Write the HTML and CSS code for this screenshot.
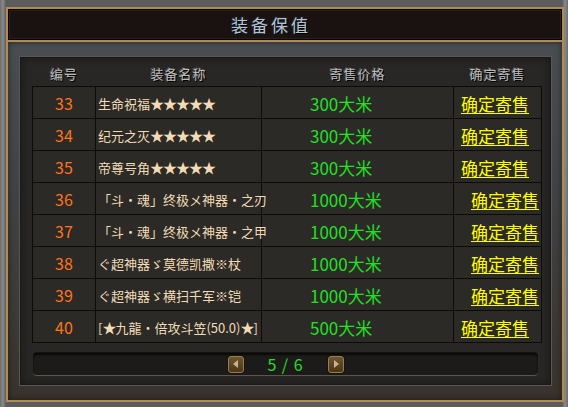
FILE: index.html
```html
<!DOCTYPE html>
<html lang="zh">
<head>
<meta charset="utf-8">
<title>装备保值</title>
<link rel="stylesheet" href="styles.css">
</head>
<body>
<div class="frame">
  <div class="title"><span>装备保值</span></div>
  <div class="stone">
    <div class="panel">
      <table class="grid">
        <colgroup><col class="c1"><col class="c2"><col class="c3"><col class="c4"></colgroup>
        <thead>
          <tr><th>编号</th><th>装备名称</th><th>寄售价格</th><th>确定寄售</th></tr>
        </thead>
        <tbody>
          <tr><td class="id">33</td><td class="name">生命祝福<span class="st">★★★★★</span></td><td class="price">300大米</td><td class="act"><a href="#">确定寄售</a></td></tr>
          <tr><td class="id">34</td><td class="name">纪元之灭<span class="st">★★★★★</span></td><td class="price">300大米</td><td class="act"><a href="#">确定寄售</a></td></tr>
          <tr><td class="id">35</td><td class="name">帝尊号角<span class="st">★★★★★</span></td><td class="price">300大米</td><td class="act"><a href="#">确定寄售</a></td></tr>
          <tr><td class="id">36</td><td class="name">「斗・魂」终极メ神器・之刃</td><td class="price">1000大米</td><td class="act wide"><a href="#">确定寄售</a></td></tr>
          <tr><td class="id">37</td><td class="name">「斗・魂」终极メ神器・之甲</td><td class="price">1000大米</td><td class="act wide"><a href="#">确定寄售</a></td></tr>
          <tr><td class="id">38</td><td class="name">ぐ超神器ゞ莫德凯撒※杖</td><td class="price">1000大米</td><td class="act wide"><a href="#">确定寄售</a></td></tr>
          <tr><td class="id">39</td><td class="name">ぐ超神器ゞ横扫千军※铠</td><td class="price">1000大米</td><td class="act wide"><a href="#">确定寄售</a></td></tr>
          <tr><td class="id">40</td><td class="name">[<span class="st">★</span>九龍・倍攻斗笠(50.0)<span class="st">★</span>]</td><td class="price">500大米</td><td class="act"><a href="#">确定寄售</a></td></tr>
        </tbody>
      </table>
      <div class="pager">
        <button class="pbtn prev" type="button"><span class="tri-l"></span></button>
        <span class="pnum">5 / 6</span>
        <button class="pbtn next" type="button"><span class="tri-r"></span></button>
      </div>
    </div>
  </div>
</div>
</body>
</html>
```
FILE: styles.css
```css
html, body {
  margin: 0;
  padding: 0;
}
body {
  width: 568px;
  height: 407px;
  box-sizing: border-box;
  padding: 7px 4px 5px 6px;
  background: linear-gradient(90deg, #6e6e6e 0px, #8a8a8a 3px, #5c5c5c 6px, #5c5c5c 562px, #8a8a8a 565px, #6a6a6a 568px);
  font-family: "Noto Sans CJK SC", "Noto Sans", sans-serif;
  overflow: hidden;
}
.frame {
  height: 395px;
  box-sizing: border-box;
  border: 2px solid #b08c50;
  display: flex;
  flex-direction: column;
  background: #3b3935;
}
.title {
  height: 33px;
  flex: none;
  box-sizing: border-box;
  border-bottom: 2px solid #b08c50;
  background: #1a1210;
  box-shadow: inset 0 0 0 1px #050303, inset 0 0 0 2px #2a1f1b;
  display: flex;
  align-items: center;
  justify-content: center;
  padding-right: 28px;
}
.title span {
  color: #b4c4d4;
  font-size: 17px;
  letter-spacing: 3px;
  text-shadow: 1px 1px 0 #000, 0 0 2px #3a5a7a;
}
.stone {
  flex: 1;
  padding: 15px 12px 15px 12px;
  background: linear-gradient(180deg, #4a4d51 0%, #424346 40%, #3d3833 80%, #3a322c 100%);
  box-shadow: inset 0 0 6px rgba(0,0,0,0.5);
  display: flex;
}
.panel {
  flex: 1;
  box-sizing: border-box;
  padding: 2px 8px 0 11px;
  background: #282725;
  border: 1px solid #1a1918;
  box-shadow: 0 0 0 1px #55585b, inset 0 0 8px rgba(0,0,0,0.4);
}
.grid {
  border-collapse: collapse;
  table-layout: fixed;
  width: 509px;
}
.c1 { width: 63px; }
.c2 { width: 166px; }
.c3 { width: 192px; }
.c4 { width: 88px; }
.grid th {
  height: 26px;
  padding: 0;
  font-size: 13px;
  font-weight: normal;
  letter-spacing: 1px;
  color: #bcbcbc;
  text-shadow: 1px 1px 0 #000, -1px -1px 0 #555;
  text-align: center;
}
.grid td {
  height: 30px;
  padding: 1px 0 0 0;
  border: 1px solid #0c0b0a;
  background: #2b2a27;
  white-space: nowrap;
  overflow: visible;
}
.id {
  text-align: center;
  color: #ff7418;
  font-size: 16px;
}
.name {
  color: #f2dcb6;
  font-size: 13px;
  padding-left: 2px !important;
}
.st {
  font-size: 14px;
  letter-spacing: -1px;
}
.price {
  color: #22e022;
  font-size: 17px;
  padding-left: 48px !important;
}
.act {
  padding-left: 7px !important;
  font-size: 17px;
}
.act.wide {
  padding-left: 17px !important;
}
.act a {
  color: #ffff00;
  text-decoration: underline;
  text-underline-offset: 2px;
}
.pager {
  margin: 10px 0 0 1px;
  width: 505px;
  height: 23px;
  box-sizing: border-box;
  border-radius: 4px;
  background: #1c1b19;
  border-bottom: 1px solid #5b5650;
  box-shadow: inset 0 2px 2px rgba(0,0,0,0.7), 0 -1px 0 #141311;
  display: flex;
  align-items: center;
  justify-content: center;
}
.pbtn {
  width: 16px;
  height: 17px;
  padding: 0;
  border: 1px solid #9a7e50;
  border-radius: 3px;
  background: linear-gradient(180deg, #6e5632 0%, #4a3519 100%);
  box-shadow: 0 0 0 1px #1a140c;
  display: flex;
  align-items: center;
  justify-content: center;
}
.pnum {
  color: #22e022;
  font-size: 16px;
  width: 84px;
  text-align: center;
  letter-spacing: 1px;
}
.tri-l, .tri-r {
  width: 0;
  height: 0;
  border-top: 4px solid transparent;
  border-bottom: 4px solid transparent;
}
.tri-l { border-right: 5px solid #c8b488; margin-right: 1px; }
.tri-r { border-left: 5px solid #c8b488; margin-left: 1px; }
```
